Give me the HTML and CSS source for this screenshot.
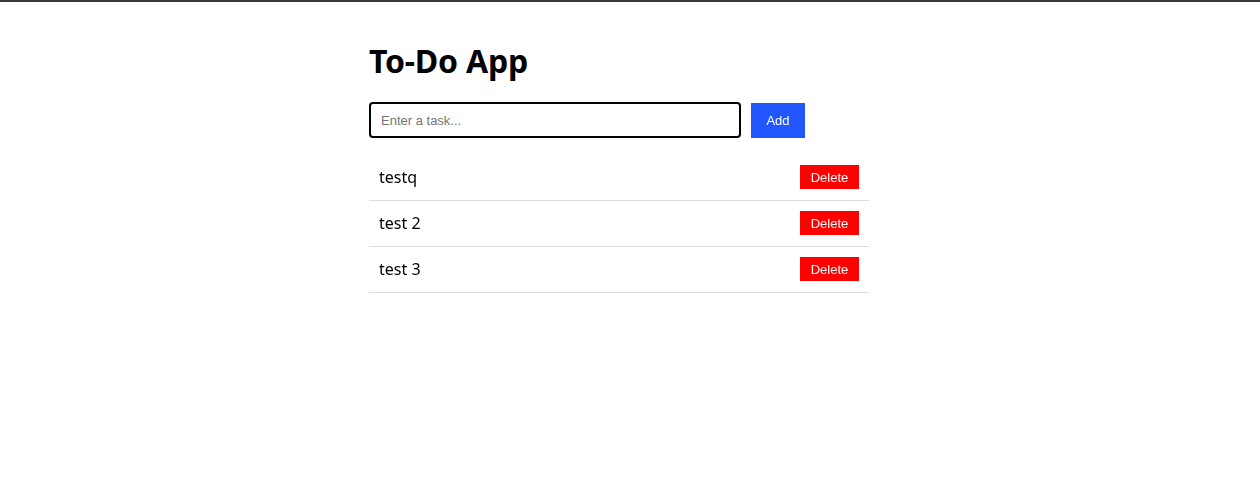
FILE: index.html
```html
<!DOCTYPE html>
<html>
<head>
<meta charset="utf-8">
<link rel="stylesheet" href="styles.css">
</head>
<body>
<div class="topbar"></div>
<div class="app">
  <h1 class="title">To-Do App</h1>
  <div class="form">
    <input class="task-input" type="text" placeholder="Enter a task..." autofocus>
    <button class="add-btn">Add</button>
  </div>
  <ul class="list">
    <li class="item"><span class="item-text">testq</span><button class="del-btn">Delete</button></li>
    <li class="item"><span class="item-text">test 2</span><button class="del-btn">Delete</button></li>
    <li class="item"><span class="item-text">test 3</span><button class="del-btn">Delete</button></li>
  </ul>
</div>
</body>
</html>
```
FILE: styles.css
```css
html, body {
  margin: 0;
  padding: 0;
  background: #fff;
}
body {
  font-family: "Noto Sans", "DejaVu Sans", sans-serif;
  color: #000;
}
.topbar {
  height: 2px;
  background: #3a3a3a;
}
.app {
  width: 500px;
  margin: 0 auto;
  padding: 40px 22px 0 0;
}
.title {
  font-size: 32px;
  font-weight: 700;
  margin: 0 0 22px 0;
  line-height: 38px;
  letter-spacing: -0.2px;
}
.form {
  display: flex;
  align-items: flex-start;
  gap: 10px;
}
.task-input {
  box-sizing: border-box;
  width: 372px;
  height: 36px;
  border: 2px solid #000;
  border-radius: 4px;
  padding: 0 10px;
  font-family: "Liberation Sans", Arial, sans-serif;
  font-size: 13px;
  outline: none;
  margin: 0;
}
.task-input::placeholder {
  color: #757575;
}
.add-btn {
  box-sizing: border-box;
  width: 54px;
  height: 35px;
  margin-top: 1px;
  background: #2257ff;
  color: #fff;
  border: none;
  font-family: "Liberation Sans", Arial, sans-serif;
  font-size: 13px;
  padding: 0;
}
.list {
  list-style: none;
  margin: 17px 0 0 0;
  padding: 0;
}
.item {
  box-sizing: border-box;
  height: 46px;
  display: flex;
  align-items: center;
  justify-content: space-between;
  padding: 0 10px 1px 10px;
  border-bottom: 1px solid #dddddd;
}
.item-text {
  font-size: 16px;
}
.del-btn {
  box-sizing: border-box;
  width: 59px;
  height: 24px;
  background: #ff0000;
  color: #fff;
  border: none;
  font-family: "Liberation Sans", Arial, sans-serif;
  font-size: 13px;
  padding: 0;
}
```
